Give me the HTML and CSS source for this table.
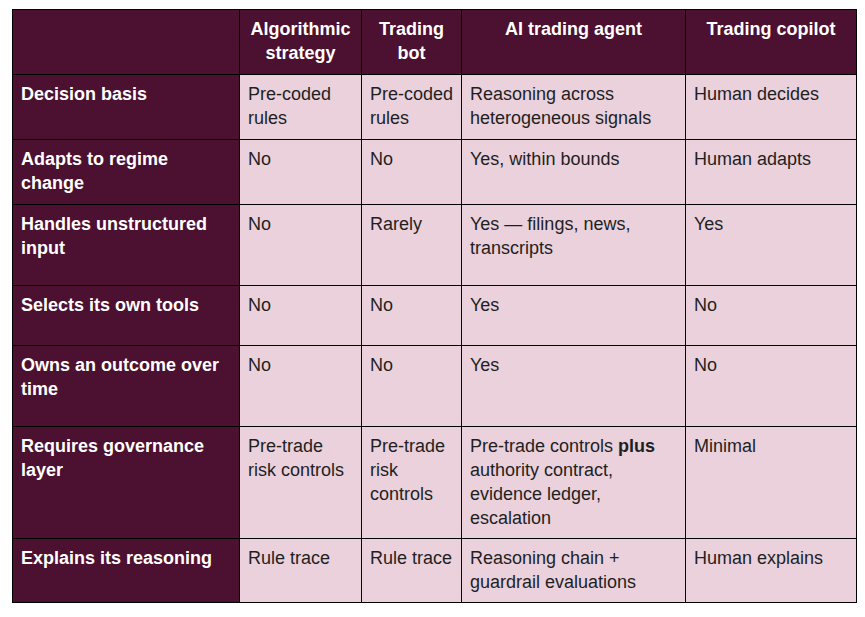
FILE: index.html
```html
<!DOCTYPE html>
<html lang="en">
<head>
<meta charset="utf-8">
<title>Trading systems comparison</title>
<link rel="stylesheet" href="styles.css">
</head>
<body>
<table class="cmp">
  <colgroup>
    <col class="c1"><col class="c2"><col class="c3"><col class="c4"><col class="c5">
  </colgroup>
  <thead>
    <tr class="h-head">
      <th class="corner"></th>
      <th>Algorithmic strategy</th>
      <th>Trading bot</th>
      <th>AI trading agent</th>
      <th>Trading copilot</th>
    </tr>
  </thead>
  <tbody>
    <tr class="h65">
      <th>Decision basis</th>
      <td>Pre-coded rules</td>
      <td>Pre-coded rules</td>
      <td>Reasoning across heterogeneous signals</td>
      <td>Human decides</td>
    </tr>
    <tr class="h65">
      <th>Adapts to regime change</th>
      <td>No</td>
      <td>No</td>
      <td>Yes, within bounds</td>
      <td>Human adapts</td>
    </tr>
    <tr class="h81">
      <th>Handles unstructured input</th>
      <td>No</td>
      <td>Rarely</td>
      <td>Yes — filings, news, transcripts</td>
      <td>Yes</td>
    </tr>
    <tr class="h60">
      <th>Selects its own tools</th>
      <td>No</td>
      <td>No</td>
      <td>Yes</td>
      <td>No</td>
    </tr>
    <tr class="h81">
      <th>Owns an outcome over time</th>
      <td>No</td>
      <td>No</td>
      <td>Yes</td>
      <td>No</td>
    </tr>
    <tr class="h112">
      <th>Requires governance layer</th>
      <td>Pre-trade risk controls</td>
      <td>Pre-trade risk controls</td>
      <td>Pre-trade controls <b>plus</b> authority contract, evidence ledger, escalation</td>
      <td>Minimal</td>
    </tr>
    <tr class="h64">
      <th>Explains its reasoning</th>
      <td>Rule trace</td>
      <td>Rule trace</td>
      <td>Reasoning chain + guardrail evaluations</td>
      <td>Human explains</td>
    </tr>
  </tbody>
</table>
</body>
</html>
```
FILE: styles.css
```css
html, body {
  margin: 0;
  padding: 0;
  background: #ffffff;
}
body {
  padding: 9px 0 0 12px;
  font-family: "Liberation Sans", Arial, sans-serif;
  font-size: 18px;
  line-height: 24px;
  color: #1f1f1f;
}
.cmp {
  border-collapse: collapse;
  table-layout: fixed;
  width: 844px;
}
.c1 { width: 227px; }
.c2 { width: 122px; }
.c3 { width: 100px; }
.c4 { width: 224px; }
.c5 { width: 171px; }
.cmp th,
.cmp td {
  border: 1px solid #000000;
  padding: 7px 8px 8px 8px;
  vertical-align: top;
  text-align: left;
}
.cmp td:nth-child(3) {
  padding-right: 3px;
}
.cmp th {
  background: #4c1130;
  color: #ffffff;
  font-weight: bold;
}
.cmp thead th {
  text-align: center;
}
.cmp td {
  background: #ead1dc;
  color: #1f1f1f;
}
.cmp td b {
  font-weight: bold;
}
.h-head { height: 65px; }
.h65 { height: 65px; }
.h81 { height: 81px; }
.h60 { height: 60px; }
.h112 { height: 112px; }
.h64 { height: 64px; }
```
